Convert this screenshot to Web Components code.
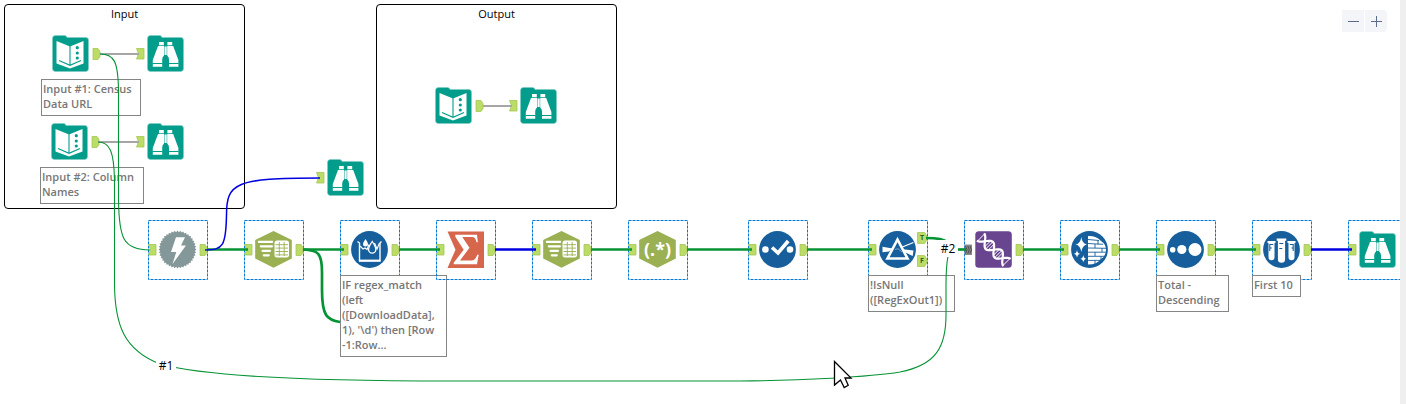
<!DOCTYPE html>
<html lang="en">
<head>
<meta charset="utf-8">
<title>Workflow</title>
<style>
  body { margin: 0; font-family: "Open Sans", "Noto Sans", sans-serif; font-size: 11px; color: #000; background: #fff; }
</style>
</head>
<body>
<workflow-app>
  <workflow-group style="--x:4;--y:4" label="Input"></workflow-group>
  <workflow-group style="--x:376;--y:4" label="Output"></workflow-group>

  <workflow-tool style="--x:41;--y:24" icon="book" output label="Text Input"></workflow-tool>
  <workflow-tool style="--x:136;--y:24" icon="browse" input label="Browse"></workflow-tool>
  <workflow-tool style="--x:40;--y:112" icon="book" output label="Text Input"></workflow-tool>
  <workflow-tool style="--x:136;--y:112" icon="browse" input label="Browse"></workflow-tool>
  <workflow-tool style="--x:316;--y:148" icon="browse" input label="Browse"></workflow-tool>
  <workflow-tool style="--x:424;--y:76" icon="book" output label="Text Input"></workflow-tool>
  <workflow-tool style="--x:509;--y:76" icon="browse" input label="Browse"></workflow-tool>

  <workflow-tool style="--x:148;--y:220" icon="download" input output selected label="Download"></workflow-tool>
  <workflow-tool style="--x:244;--y:220" icon="parse" input output selected label="Text To Columns"></workflow-tool>
  <workflow-tool style="--x:340;--y:220" icon="multirow" input output selected label="Multi-Row Formula"></workflow-tool>
  <workflow-tool style="--x:532;--y:220" icon="parse" input output selected label="Text To Columns"></workflow-tool>
  <workflow-tool style="--x:628;--y:220" icon="regex" input output selected label="RegEx"></workflow-tool>
  <workflow-tool style="--x:748;--y:220" icon="select" input output selected label="Select"></workflow-tool>
  <workflow-tool style="--x:868;--y:220" icon="filter" input split selected label="Filter"></workflow-tool>
  <workflow-tool style="--x:964;--y:220" icon="union" multi output selected label="Union"></workflow-tool>
  <workflow-tool style="--x:1060;--y:220" icon="cleanse" input output selected label="Data Cleansing"></workflow-tool>
  <workflow-tool style="--x:1156;--y:220" icon="sort" input output selected label="Sort"></workflow-tool>
  <workflow-tool style="--x:1252;--y:220" icon="sample" input output selected label="Sample"></workflow-tool>
  <workflow-tool style="--x:1348;--y:220" icon="browse" input selected label="Browse"></workflow-tool>

  <workflow-note style="--x:41;--y:79;--w:100">Input #1: Census<br>Data URL</workflow-note>
  <workflow-note style="--x:40;--y:167;--w:104">Input #2: Column<br>Names</workflow-note>
  <workflow-note style="--x:340;--y:275;--w:107">IF regex_match<br>(left<br>([DownloadData],<br>1), '\d') then [Row<br>-1:Row...</workflow-note>
  <workflow-note style="--x:868;--y:275;--w:87">!IsNull<br>([RegExOut1])</workflow-note>
  <workflow-note style="--x:1156;--y:275;--w:73">Total -<br>Descending</workflow-note>
  <workflow-note style="--x:1252;--y:275;--w:49">First 10</workflow-note>

  <workflow-tool style="--x:436;--y:220" icon="summarize" input output selected label="Summarize"></workflow-tool>

  <workflow-wires></workflow-wires>
  <wire-label style="--x:156;--y:357">#1</wire-label>
  <wire-label style="--x:938;--y:240">#2</wire-label>
  <mouse-pointer style="--x:833;--y:360"></mouse-pointer>
  <zoom-controls slot="controls"></zoom-controls>
</workflow-app>

<script>
const FOLDER = `<path d="M.5 3.5q0-3 3-3h9q2 0 2.500 2h19q2.500 0 2.500 3v28q0 3-3 3h-30q-3 0-3-3z" fill="#049d8c" stroke="#7fcdc4" stroke-width=".6"/>`;
const DISC = `<circle cx="18.500" cy="18.500" r="18.400" fill="#165f9c"/>`;
const HEX = `<path d="M18.500 0L36.800 9v18.500L18.500 36.800.2 27.500V9z" fill="#9ab052"/>`;

/* Gear outline of the download tool: alternate between two radii. */
const gear = Array.from({ length: 80 }, (_, i) => {
  const r = i % 2 ? 17.400 : 18.900, a = i * Math.PI / 40;
  return (18.500 + r * Math.cos(a)).toFixed(1) + ',' + (18.500 + r * Math.sin(a)).toFixed(1);
}).join(' ');

/* Two strands twisting round a diagonal axis. */
const strand = side => Array.from({ length: 41 }, (_, i) => {
  const t = i / 40, v = side * 4.800 * Math.cos(t * Math.PI * 3);
  return (5.500 + 26.500 * t + v * .75).toFixed(1) + ',' + (6 + 25.500 * t - v * .75).toFixed(1);
}).join(' ');
const rungs = [.02, .27, .33, .4, .6, .67, .73, .98].map(t => {
  const v = 3.400 * Math.cos(t * Math.PI * 3), x = 5.500 + 26.500 * t, y = 6 + 25.500 * t;
  return `M${x + v} ${y - v}L${x - v} ${y + v}`;
}).join('');

const ICONS = {
  book: FOLDER + `<path d="M4.500 6L18 11.500 31.500 6v22.500L18 33.500 4.500 28.500z" fill="#fff"/>
    <path d="M18 11v18.500M7 25.500l11 4.800 11-4.800" fill="none" stroke="#049d8c" stroke-width="1.100"/>
    <g fill="#049d8c"><circle cx="25.300" cy="12.700" r="1.600"/><circle cx="25.300" cy="18" r="1.600"/><circle cx="25.300" cy="23" r="1.600"/></g>`,
  browse: FOLDER + `<g fill="#fff"><path d="M12 7h4.800v3.200H12zM20.400 7h4.800v3.200h-4.800zM11 11h6v9.500q-1.800 1.500-1.800 4v7.300H5.800v-6.800zM26.200 11h-6v9.500q1.800 1.500 1.800 4v7.300h9.400v-6.800zM17.500 11.500h2.200v8.500h-2.200z"/></g>
    <path d="M5.500 28.500h10M21.800 28.500h10" stroke="#049d8c"/>`,
  download: `<polygon points="${gear}" fill="#859899"/><path d="M17 6.300h9L22 14.500h5L13.500 33l3.800-12H12z" fill="#fff"/>`,
  parse: HEX + `<path d="M3.800 10.800h13.400M5.800 15.300h11.200M7.500 19.800h7.500M8.800 24.300h5" stroke="#fff" stroke-width="2.200" stroke-linecap="round"/>
    <rect x="19.500" y="9.500" width="14.500" height="17" rx="2.500" fill="#fff"/>
    <path d="M20.500 13.700h12.500M20.500 17.100h12.500M20.500 20.500h12.500M20.500 23.900h12.500M24.300 11v14M29.200 11v14" stroke="#9ab052" stroke-width=".9"/>`,
  regex: HEX + `<text x="18.500" y="24.500" text-anchor="middle" font-family="Noto Sans, sans-serif" font-weight="700" font-size="18" fill="#fff">(.*)</text>`,
  multirow: DISC + `<path d="M6.500 10.500l2 1.500v17.500h20.500V12l1.500-1.500" fill="none" stroke="#fff" stroke-width="1.400"/>
    <path d="M8 29.800h21.500" stroke="#fff" stroke-width="2"/>
    <path d="M9 15l3 3 2-1 2 1.500 2-5M23.500 12l2.500 6 2.500-6" fill="none" stroke="#fff" stroke-width="1.200"/>
    <path d="M14.500 8q2.500 3.600 2.500 5a2.500 2.500 0 0 1-5 0q0-1.400 2.500-5z" fill="#fff"/>
    <path d="M21.200 10.500q3.600 5.200 3.600 8a3.600 3.600 0 0 1-7.200 0q0-2.800 3.600-8z" fill="#165f9c" stroke="#fff" stroke-width="1.300"/>`,
  summarize: `<path d="M.5.500H37V37H.5L8.500 18.700z" fill="#d6674c"/>
    <path d="M8.300 3.700H30l.8 7.500h-1.300Q28.500 6 25 6h-9.700l7.200 10.800L13 29.500h12q3.500 0 5.200-5.700h1.500L30 33.300H6.700v-1.500l10-13-8.400-13z" fill="#fff"/>`,
  select: DISC + `<g fill="#fff"><circle cx="6.400" cy="18.500" r="3.300"/><circle cx="31" cy="18.500" r="3.300"/></g>
    <path d="M13 16.500l6 5.500L29.200 10" fill="none" stroke="#fff" stroke-width="3.600"/>`,
  filter: DISC + `<path d="M18.500 8.500L8.500 27.500h20z" fill="#165f9c" stroke="#fff" stroke-width="2.600"/>
    <path d="M3.500 15.800l10 1.700L10 20.500l-6.500.7z" fill="#fff"/>
    <path d="M22 16.500l12.500-5" stroke="#fff" stroke-width="1.200"/><path d="M24 18.200l10.500 1.300-.8 5.500L25 20.800z" fill="#fff"/>
    <path d="M16 18.500l3-.8 4 3.200" fill="none" stroke="#8fb4d2" stroke-width=".8"/>`,
  union: `<rect x=".3" y=".3" width="36.500" height="36.500" rx="3.500" fill="#6a458f"/>
    <polyline points="${strand(1)}" fill="none" stroke="#fff" stroke-width="2.200"/>
    <polyline points="${strand(-1)}" fill="none" stroke="#fff" stroke-width="2.200"/>
    <path d="${rungs}" stroke="#fff"/>`,
  cleanse: DISC + `<g fill="#fff"><path d="M10.300 6q.8 6.500 5.700 7.500-4.900 1-5.700 7.500-.8-6.500-5.700-7.500 4.900-1 5.700-7.500zM6 19q.5 3.400 3.200 3.800Q6.500 23.200 6 26.600q-.5-3.400-3.200-3.800Q5.500 22.400 6 19zM12.300 24q.5 3.400 3 3.800-2.500.4-3 3.800-.5-3.400-3-3.800 2.500-.4 3-3.800z"/>
    <path d="M17 5q8-.5 13 5 5 3 5 9t-5 9Q26 33.500 17 33.500z"/></g>
    <path d="M17 8.500l11 1M17 12.500l15 .8M17 17l18.500 .3M17 21.200h18.500M17 25.300h17M17 29.400h13M27 9.500v4M24 13v4M31 17v4M24 21v4M30 25v4M24 29.500v3.500" stroke="#165f9c" stroke-width=".9"/>`,
  sort: DISC + `<g fill="#fff"><circle cx="5.700" cy="18.700" r="2.800"/><circle cx="14.800" cy="18.500" r="4.600"/><circle cx="28" cy="18.500" r="6.500"/></g>`,
  sample: DISC + `<g fill="#fff"><path d="M13.700 7.500h9.600v2.300h-1.200v18.500q0 3.500-3.600 3.500t-3.600-3.500V9.800h-1.200zM4.500 10h8v2h-1v14q0 3.200-3 3.200t-3-3.200V12h-1zM24.500 10h8v2h-1v14q0 3.200-3 3.200t-3-3.200V12h-1z"/></g>
    <path d="M6.800 13.500h3.500M6.800 17h2M6.800 13v7M16.300 12.500h4M16.300 17.500h3M26.800 13.500h3.500M28.500 17h2M30.200 13v7" stroke="#165f9c" stroke-width="1.100" fill="none"/>`
};

const PLACE = `position:absolute; left:calc(var(--x) * 1px); top:calc(var(--y) * 1px);`;
const make = (name, html) => customElements.define(name, class extends HTMLElement {
  constructor() { super(); this.attachShadow({ mode: 'open' }); }
  connectedCallback() {
    this.shadowRoot.innerHTML = typeof html === 'function' ? html(this) : html;
  }
});

make('workflow-app', `
  <style>
    :host { display:flex; min-height:100vh; }
    main { flex:1; min-width:0; position:relative; overflow:hidden; background:#fff; }
    aside { flex:none; width:6px; background:#efefef; }
    .controls { position:absolute; top:10px; right:13px; }
  </style>
  <main><slot></slot><div class="controls"><slot name="controls"></slot></div></main><aside></aside>`);

make('workflow-group', el => `
  <style>
    :host { ${PLACE} display:block; box-sizing:border-box; width:241px; height:205px; border:1px solid #000; border-radius:4px; }
    h2 { margin:0; padding-top:1px; font-size:11px; line-height:15px; font-weight:400; text-align:center; }
  </style>
  <h2>${el.getAttribute('label')}</h2>`);

make('workflow-note', `
  <style>
    :host { ${PLACE} display:block; box-sizing:border-box; width:calc(var(--w) * 1px); padding:1px 0 4px 1px;
      border:1px solid #858585; background:#fff; color:#777; font-weight:600; line-height:15px; white-space:nowrap; }
  </style><slot></slot>`);

make('wire-label', `
  <style>:host { ${PLACE} display:block; width:20px; background:#fff; font-size:12px; line-height:17px; text-align:center; }</style>
  <slot></slot>`);

make('workflow-tool', el => {
  const has = a => el.hasAttribute(a);
  const skin = 'fill="#bbdd68" stroke="#a3c653" stroke-width=".8"';
  const out = (x, y, w) => `<path d="M${x} ${y}h${w - 2}l2 3v5l-2 3h-${w - 2}z" ${skin}/>`;
  return `
  <style>
    :host { ${PLACE} display:block; width:60px; height:60px; }
    svg { display:block; }
    text.port { font:700 7px "Open Sans", sans-serif; fill:#2c5f2d; }
  </style>
  <svg width="60" height="60" viewBox="0 0 60 60" role="img" aria-label="${el.getAttribute('label')}">
    ${has('selected') ? '<rect x=".5" y=".5" width="59" height="59" fill="none" stroke="#0078d7" stroke-dasharray="3 1"/>' : ''}
    <g transform="translate(11 11)">${ICONS[el.getAttribute('icon')]}</g>
    ${has('input') ? `<path d="M.5 24.500h7.500v10.500h-7.500l2-5.200z" ${skin}/>` : ''}
    ${has('multi') ? `<path d="M.5 24.500h7.500v10.500h-7.500z" fill="#8a8a8a"/><path d="M1.500 26q3 3.700 0 7.500M3.800 26q3 3.700 0 7.500M6 26q3 3.700 0 7.500" fill="none" stroke="#444" stroke-width=".9"/>` : ''}
    ${has('output') ? out(52, 24.500, 7) : ''}
    ${has('split') ? out(49.500, 12.500, 9) + out(49.500, 35.500, 9) +
      '<text class="port" x="52" y="20">T</text><text class="port" x="52" y="43">F</text>' : ''}
  </svg>`;
});

make('workflow-wires', () => {
  const row = [['g', 207, 248], ['g', 303, 344], ['g', 399, 440], ['b', 495, 536], ['g', 591, 632], ['g', 687, 752],
    ['g', 807, 872], ['g', 958, 966], ['g', 1023, 1064], ['g', 1119, 1160], ['g', 1215, 1256], ['b', 1311, 1352]];
  return `
  <style>
    :host { display:block; position:absolute; inset:0; pointer-events:none; }
    svg { display:block; width:100%; height:100%; }
    path { fill:none; stroke-width:1.100; }
    .thick { stroke-width:2.700; }
    .g { stroke:#069335; } .b { stroke:#0000e0; } .n { stroke:#a6a6a6; stroke-width:2; }
  </style>
  <svg aria-hidden="true">
    <path class="n" d="M100 54H139M98 142H139M483 106H512"/>
    ${row.map(([c, a, b]) => `<path class="thick ${c}" d="M${a} 249.500H${b}"/>`).join('')}
    <path class="g" d="M100 54C114 54 118 61 118.500 90V200C119 238 123 250 150 250"/>
    <path class="g" d="M98 142C110 142 114 152 114.500 180V285C115 325 124 350 160 364C210 378 330 381 450 381H740C800 380.500 870 377 900 372C936 365 946 347 946 315V285Q946 267 948 256"/>
    <path class="thick g" d="M926 238Q943 238 947 242"/>
    <path class="thick g" d="M303 249.500C318 250 322 253 322 272V290C322 316 327 320 340 322"/>
    <path class="b" style="stroke-width:1.500" d="M205 250C223 250 226 246 226.500 215C226.500 183 235 178 320 178"/>
  </svg>`;
});

make('mouse-pointer', `
  <style>:host { ${PLACE} display:block; } svg { display:block; }</style>
  <svg width="20" height="30" viewBox="0 0 20 30" aria-hidden="true">
    <path d="M1.500 1.500L18 18H12l3.200 7.300-4 2.200L7.500 20 1.500 25z" fill="#fff" stroke="#000" stroke-width="1.300"/>
  </svg>`);

make('zoom-controls', `
  <style>
    :host { display:flex; gap:1px; }
    button { width:22px; height:22px; margin:0; padding:0; border:0; background:#f3f5f9; display:grid; place-items:center; }
    button:first-child { border-radius:4px 0 0 4px; }
    button:last-child { border-radius:0 4px 4px 0; }
    path { stroke:#5c6b8c; }
  </style>
  <button type="button" aria-label="Zoom out"><svg width="12" height="12"><path d="M1 6.500h11"/></svg></button>
  <button type="button" aria-label="Zoom in"><svg width="12" height="12"><path d="M1 6.500h11M6.500 1v11"/></svg></button>`);
</script>
</body>
</html>
